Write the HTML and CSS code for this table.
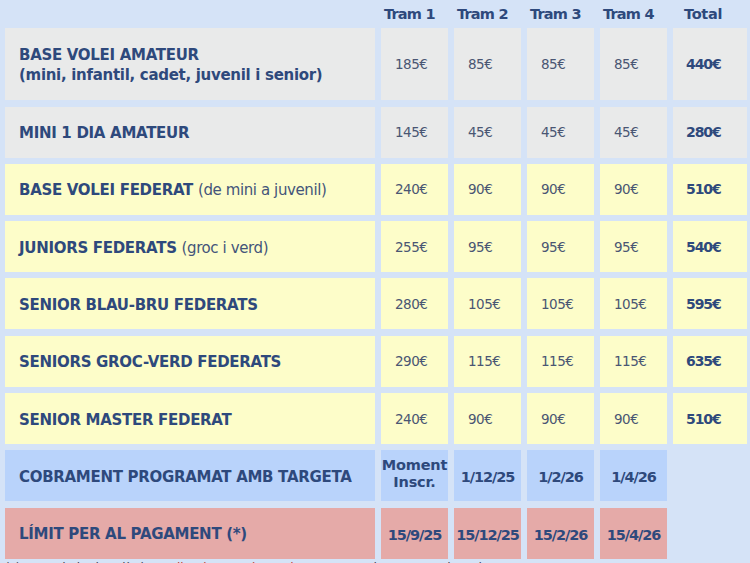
FILE: index.html
```html
<!DOCTYPE html>
<html lang="ca">
<head>
<meta charset="utf-8">
<title>Quotes</title>
<link rel="stylesheet" href="styles.css">
</head>
<body>
<div class="page">
  <div class="grid">
    <div class="hd hd-blank"></div>
    <div class="hd">Tram 1</div>
    <div class="hd">Tram 2</div>
    <div class="hd">Tram 3</div>
    <div class="hd">Tram 4</div>
    <div class="hd hd-total">Total</div>

    <div class="cell gray label">BASE VOLEI AMATEUR<br>(mini, infantil, cadet, juvenil i senior)</div>
    <div class="cell gray num">185€</div>
    <div class="cell gray num">85€</div>
    <div class="cell gray num">85€</div>
    <div class="cell gray num">85€</div>
    <div class="cell gray tot">440€</div>

    <div class="cell gray label">MINI 1 DIA AMATEUR</div>
    <div class="cell gray num">145€</div>
    <div class="cell gray num">45€</div>
    <div class="cell gray num">45€</div>
    <div class="cell gray num">45€</div>
    <div class="cell gray tot">280€</div>

    <div class="cell yellow label"><span>BASE VOLEI FEDERAT <span class="light">(de mini a juvenil)</span></span></div>
    <div class="cell yellow num">240€</div>
    <div class="cell yellow num">90€</div>
    <div class="cell yellow num">90€</div>
    <div class="cell yellow num">90€</div>
    <div class="cell yellow tot">510€</div>

    <div class="cell yellow label"><span>JUNIORS FEDERATS <span class="light">(groc i verd)</span></span></div>
    <div class="cell yellow num">255€</div>
    <div class="cell yellow num">95€</div>
    <div class="cell yellow num">95€</div>
    <div class="cell yellow num">95€</div>
    <div class="cell yellow tot">540€</div>

    <div class="cell yellow label">SENIOR BLAU-BRU FEDERATS</div>
    <div class="cell yellow num">280€</div>
    <div class="cell yellow num">105€</div>
    <div class="cell yellow num">105€</div>
    <div class="cell yellow num">105€</div>
    <div class="cell yellow tot">595€</div>

    <div class="cell yellow label">SENIORS GROC-VERD FEDERATS</div>
    <div class="cell yellow num">290€</div>
    <div class="cell yellow num">115€</div>
    <div class="cell yellow num">115€</div>
    <div class="cell yellow num">115€</div>
    <div class="cell yellow tot">635€</div>

    <div class="cell yellow label">SENIOR MASTER FEDERAT</div>
    <div class="cell yellow num">240€</div>
    <div class="cell yellow num">90€</div>
    <div class="cell yellow num">90€</div>
    <div class="cell yellow num">90€</div>
    <div class="cell yellow tot">510€</div>

    <div class="cell blue label">COBRAMENT PROGRAMAT AMB TARGETA</div>
    <div class="cell blue date moment">Moment<br>Inscr.</div>
    <div class="cell blue date">1/12/25</div>
    <div class="cell blue date">1/2/26</div>
    <div class="cell blue date">1/4/26</div>
    <div class="empty"></div>

    <div class="cell red label">LÍMIT PER AL PAGAMENT (*)</div>
    <div class="cell red date">15/9/25</div>
    <div class="cell red date">15/12/25</div>
    <div class="cell red date">15/2/26</div>
    <div class="cell red date">15/4/26</div>
    <div class="empty"></div>
  </div>
  <p class="note">(*) Passada la data límit <span class="warn">s'aplicarà un recàrrec de 10€</span> per cada tram pendent de pagament.</p>
</div>
</body>
</html>
```
FILE: styles.css
```css
html, body {
  margin: 0;
  padding: 0;
  background: #d5e3f7;
}

body {
  font-family: "DejaVu Sans", "Liberation Sans", sans-serif;
  color: #2e497c;
}

.page {
  padding: 0 3px 0 5px;
}

.grid {
  display: grid;
  grid-template-columns: 370px 67px 67px 67px 67px 74px;
  grid-template-rows: 22px 72px;
  grid-auto-rows: 51px;
  column-gap: 6px;
  row-gap: 6.3px;
}

.hd {
  align-self: start;
  padding: 4px 0 0 3px;
  font-weight: bold;
  font-size: 14.5px;
  line-height: 20px;
  letter-spacing: -0.8px;
  white-space: nowrap;
}

.hd-total {
  padding-left: 11px;
  letter-spacing: -0.3px;
}

.cell {
  display: flex;
  align-items: center;
  box-sizing: border-box;
}

.gray { background: #e9eaea; }
.yellow { background: #fdfdc9; }
.blue { background: #b9d3fb; }
.red { background: #e5aaa8; }

.label {
  padding: 2px 0 0 14px;
  font-weight: bold;
  font-size: 15px;
  line-height: 20px;
  letter-spacing: -0.3px;
}

.light {
  font-weight: normal;
  color: #44557a;
  letter-spacing: -0.4px;
}

.num {
  padding-left: 14px;
  font-size: 13.5px;
  color: #4a5673;
  letter-spacing: -0.5px;
}

.tot {
  padding-left: 13px;
  font-size: 14px;
  font-weight: bold;
  letter-spacing: -1.1px;
}

.date {
  justify-content: center;
  padding-top: 3px;
  font-size: 14.5px;
  font-weight: bold;
  letter-spacing: -1.1px;
  white-space: nowrap;
}

.moment {
  text-align: center;
  line-height: 17px;
  letter-spacing: -0.2px;
  display: block;
  padding-top: 7px;
}

.empty { background: transparent; }

.note {
  margin: 1px 0 0;
  font-size: 12px;
  line-height: 16px;
  color: #3d3d4a;
  white-space: nowrap;
}

.warn { color: #c0392b; }
```
